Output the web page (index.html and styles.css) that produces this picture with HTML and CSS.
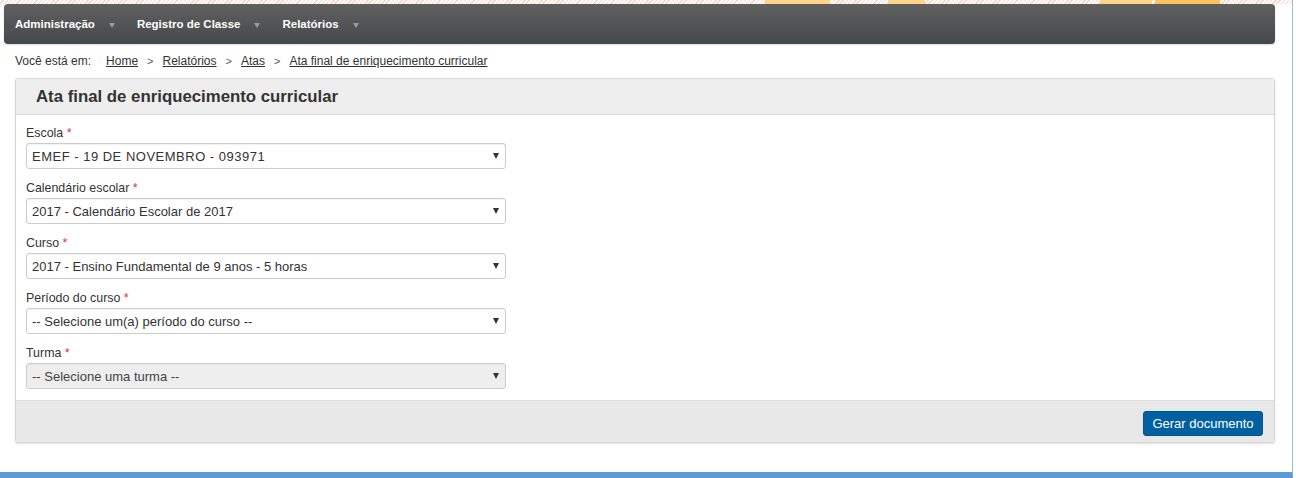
FILE: index.html
```html
<!DOCTYPE html>
<html lang="pt-BR">

<head>
  <meta charset="UTF-8">
  <title>Ata final de enriquecimento curricular</title>
  <link rel="stylesheet" href="styles.css">
</head>

<body>
  <div class="page">
    <div class="top-strip"></div>

    <div class="navbar">
      <a class="nav-item" href="javascript:;">Administração <span class="nav-arrow"></span></a>
      <a class="nav-item" href="javascript:;">Registro de Classe <span class="nav-arrow"></span></a>
      <a class="nav-item" href="javascript:;">Relatórios <span class="nav-arrow"></span></a>
    </div>

    <div class="breadcrumb">
      <span class="crumb-label">Você está em:</span>
      <a href="javascript:;">Home</a>
      <span class="sep">&gt;</span>
      <a href="javascript:;">Relatórios</a>
      <span class="sep">&gt;</span>
      <a href="javascript:;">Atas</a>
      <span class="sep">&gt;</span>
      <a href="javascript:;">Ata final de enriquecimento curricular</a>
    </div>

    <div class="panel">
      <div class="panel-title">Ata final de enriquecimento curricular</div>

      <div class="panel-body">
        <div class="field">
          <label>Escola <span class="req">*</span></label>
          <div class="select-box">
            <select class="upper">
              <option>EMEF - 19 DE NOVEMBRO - 093971</option>
            </select>
          </div>
        </div>
        <div class="field">
          <label>Calendário escolar <span class="req">*</span></label>
          <div class="select-box">
            <select>
              <option>2017 - Calendário Escolar de 2017</option>
            </select>
          </div>
        </div>
        <div class="field">
          <label>Curso <span class="req">*</span></label>
          <div class="select-box">
            <select>
              <option>2017 - Ensino Fundamental de 9 anos - 5 horas</option>
            </select>
          </div>
        </div>
        <div class="field">
          <label>Período do curso <span class="req">*</span></label>
          <div class="select-box">
            <select>
              <option>-- Selecione um(a) período do curso --</option>
            </select>
          </div>
        </div>
        <div class="field">
          <label>Turma <span class="req">*</span></label>
          <div class="select-box">
            <select disabled>
              <option>-- Selecione uma turma --</option>
            </select>
          </div>
        </div>
      </div>

      <div class="panel-footer">
        <input type="submit" class="btn-primary" value="Gerar documento">
      </div>
    </div>
  </div>
</body>

</html>
```

FILE: styles.css
```css
* {
  padding: 0;
  margin: 0;
  box-sizing: border-box;
}

body {
  font-family: "Liberation Sans", Arial, sans-serif;
  font-size: 12px;
  color: #333;
  background: #fff;
}

.page {
  width: 1293px;
  height: 478px;
  background: #fff;
  border-right: 1px solid #9db8d2;
  border-bottom: 6px solid #5d9bd8;
  overflow: hidden;
}

/* faixa listrada laranja acima do menu */
.top-strip {
  height: 4px;
  background:
    linear-gradient(to right,
      transparent 765px, #ffd38a 765px, #ffd38a 830px,
      transparent 830px, transparent 888px, #ffd38a 888px, #ffd38a 925px,
      transparent 925px, transparent 1100px, #ffd38a 1100px, #ffd38a 1152px,
      transparent 1152px, transparent 1155px, #ffc55a 1155px, #ffc55a 1220px,
      transparent 1220px),
    repeating-linear-gradient(135deg, #fff 0, #fff 2px, #f9d2c0 2px, #f9d2c0 3px);
}

.navbar {
  display: flex;
  align-items: center;
  height: 40px;
  margin: 0 17px 0 4px;
  background: linear-gradient(#606060, #45484a);
  border-radius: 4px;
  box-shadow: 0 1px 2px rgba(0, 0, 0, .15);
}

.nav-item {
  display: flex;
  align-items: center;
  padding: 0 11px;
  color: #fff;
  font-weight: bold;
  font-size: 11.5px;
  text-decoration: none;
  height: 40px;
}

.nav-arrow {
  display: inline-block;
  margin-left: 14px;
  margin-top: 3px;
  width: 0;
  height: 0;
  border-left: 3px solid transparent;
  border-right: 3px solid transparent;
  border-top: 5px solid #9a9a9a;
}

.breadcrumb {
  display: flex;
  align-items: center;
  height: 34px;
  padding-left: 15px;
  font-size: 12px;
  color: #333;
}

.breadcrumb .crumb-label {
  margin-right: 15px;
}

.breadcrumb a {
  color: #333;
  text-decoration: underline;
}

.breadcrumb .sep {
  margin: 0 9px;
  color: #555;
  font-size: 11px;
}

.panel {
  margin: 0 17px 0 15px;
  border: 1px solid #d6d6d6;
  border-radius: 3px;
  box-shadow: 0 1px 2px rgba(0, 0, 0, .12);
  background: #fff;
}

.panel-title {
  height: 36px;
  line-height: 36px;
  padding-left: 20px;
  font-size: 16.8px;
  font-weight: bold;
  color: #333;
  background: #eee;
  border-bottom: 1px solid #d9d9d9;
}

.panel-body {
  padding: 10px 10px 0 10px;
}

.field {
  margin-bottom: 11px;
}

.field label {
  display: block;
  line-height: 16px;
  margin-bottom: 2px;
  font-size: 12.4px;
  color: #333;
}

.req {
  color: #e0314b;
}

.select-box {
  position: relative;
  width: 480px;
}

.select-box select {
  display: block;
  width: 100%;
  height: 26px;
  padding: 0 24px 0 5px;
  font-family: "Liberation Sans", Arial, sans-serif;
  font-size: 13px;
  color: #333;
  background: #fff;
  border: 1px solid #ccc;
  border-radius: 3px;
  box-shadow: inset 0 1px 1px rgba(0, 0, 0, .05);
  -webkit-appearance: none;
  appearance: none;
  outline: none;
}

.select-box select.upper {
  letter-spacing: .5px;
}

.select-box select:disabled {
  background: #eee;
  color: #444;
  opacity: 1;
}

/* seta do select */
.select-box::after {
  content: "";
  position: absolute;
  right: 7px;
  top: 10px;
  border-left: 3.5px solid transparent;
  border-right: 3.5px solid transparent;
  border-top: 6px solid #333;
  pointer-events: none;
}

.panel-footer {
  display: flex;
  justify-content: flex-end;
  padding: 10px 11px 5px;
  background: #e8e8e8;
  border-top: 1px solid #dcdcdc;
  border-radius: 0 0 3px 3px;
  height: 42px;
}

.btn-primary {
  height: 25px;
  width: 120px;
  padding: 0;
  font-family: "Liberation Sans", Arial, sans-serif;
  font-size: 13px;
  color: #fff;
  background: #0060a0;
  border: 1px solid #00558e;
  border-radius: 3px;
}
```
